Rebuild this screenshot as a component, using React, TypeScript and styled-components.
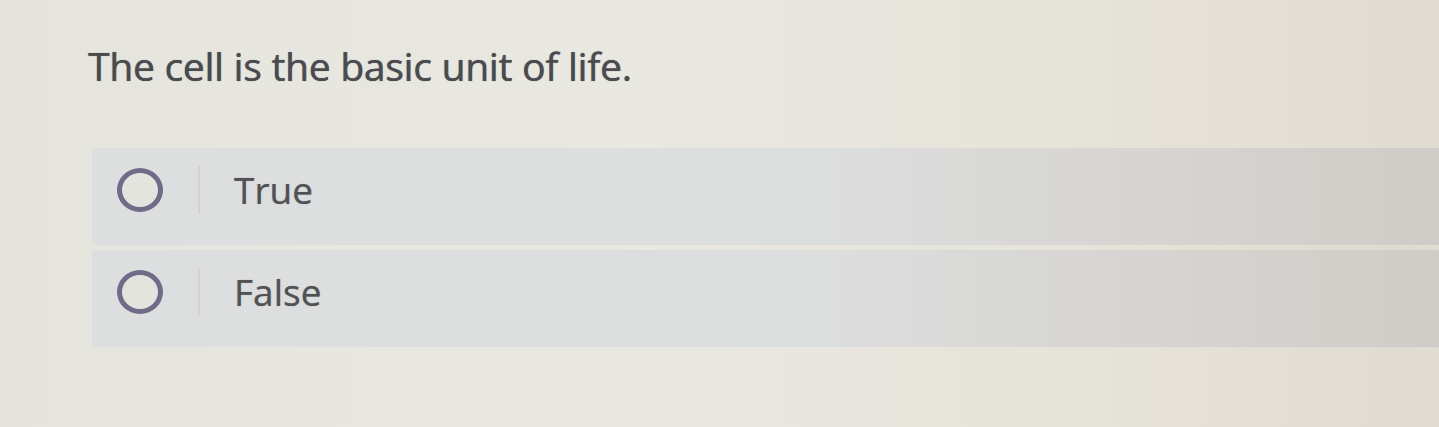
import styled, { createGlobalStyle } from 'styled-components';

const GlobalStyle = createGlobalStyle`
  html, body {
    margin: 0;
    padding: 0;
  }
  body {
    background: linear-gradient(90deg, #e6e5dd 0%, #e9e8e1 45%, #e6e2d8 80%, #e0dbd1 100%);
    font-family: 'Open Sans', 'Noto Sans', sans-serif;
  }
`;

const options = ['True', 'False'];

const App = () => {
  return (
    <>
      <GlobalStyle />
      <Page>
        <Question>The cell is the basic unit of life.</Question>
        <OptionList>
          {options.map((label) => (
            <Option key={label}>
              <RadioCell>
                <Radio />
              </RadioCell>
              <Divider />
              <Label>{label}</Label>
            </Option>
          ))}
        </OptionList>
      </Page>
    </>
  );
};

const Page = styled.div`
  width: 1439px;
  height: 427px;
  padding: 39px 0 0 88px;
  box-sizing: border-box;
  overflow: hidden;
`;

const Question = styled.h1`
  margin: 0 0 56px 0;
  font-size: 39px;
  font-weight: 400;
  color: #4a4a4f;
  letter-spacing: -0.25px;
  text-shadow: 0 0 1px rgba(74, 74, 79, 0.7), 0.4px 0 0 rgba(74, 74, 79, 0.6);
`;

const OptionList = styled.div`
  display: flex;
  flex-direction: column;
  gap: 5px;
  margin-left: 4px;
`;

const Option = styled.div`
  height: 97px;
  padding-bottom: 14px;
  box-sizing: border-box;
  display: flex;
  align-items: center;
  background: linear-gradient(90deg, #dddedf 0%, #dcdddd 55%, #d6d4d1 80%, #d0cbc6 100%);
`;

const RadioCell = styled.div`
  width: 106px;
  display: flex;
  justify-content: flex-start;
  padding-left: 25px;
  box-sizing: border-box;
`;

const Radio = styled.span`
  width: 36px;
  height: 34px;
  border: 5px solid #6e6c88;
  border-radius: 50%;
  background: #e4e4df;
`;

const Divider = styled.div`
  width: 2px;
  height: 48px;
  background: #d2d2d3;
`;

const Label = styled.span`
  margin-left: 34px;
  font-size: 37px;
  color: #515155;
  text-shadow: 0 0 1px rgba(81, 81, 85, 0.6);
`;

export default App;
